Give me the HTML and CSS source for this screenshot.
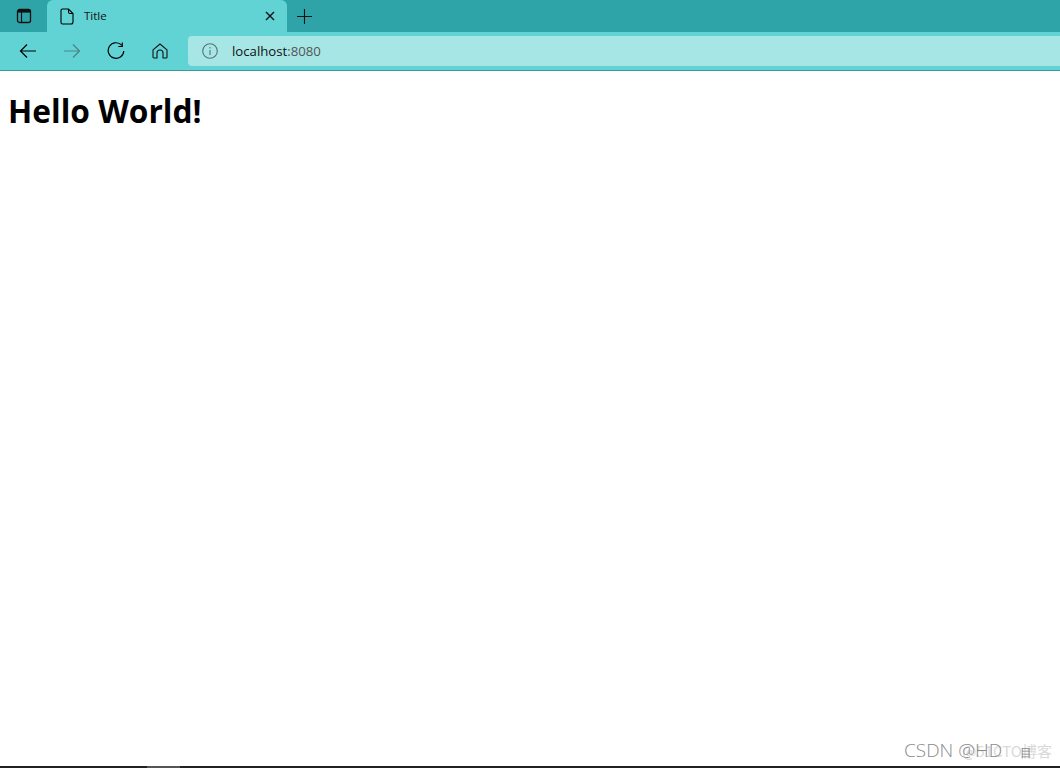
FILE: index.html
```html
<!DOCTYPE html>
<html lang="en">
<head>
    <meta charset="UTF-8">
    <title>Title</title>
    <link rel="stylesheet" href="styles.css">
</head>
<body>
    <div class="tabstrip">
        <div class="tab-actions">
            <svg class="icon" width="16" height="16" viewBox="0 0 16 16">
                <rect x="1.500" y="1.500" width="13" height="13" rx="2" fill="none" stroke="#111" stroke-width="1.300"/>
                <path d="M2 2h12v2.600H2z" fill="#111"/>
                <path d="M5.500 4v10" stroke="#111" stroke-width="1.200"/>
            </svg>
        </div>
        <div class="tab">
            <svg class="icon" width="14" height="17" viewBox="0 0 14 17">
                <path d="M2.500 1h6l4.500 4.500V14a2 2 0 0 1-2 2H2.500a1.500 1.500 0 0 1-1.500-1.500V2.500A1.500 1.500 0 0 1 2.500 1zM8.500 1v3a1.500 1.500 0 0 0 1.500 1.500h3" fill="none" stroke="#000" stroke-width="1.100"/>
            </svg>
            <span class="tab-title">Title</span>
            <svg class="icon tab-close" width="10" height="10" viewBox="0 0 10 10">
                <path d="M1 1l8 8M9 1l-8 8" stroke="#111" stroke-width="1.400"/>
            </svg>
        </div>
        <div class="new-tab">
            <svg class="icon" width="15" height="15" viewBox="0 0 15 15">
                <path d="M7.500 0v15M0 7.500h15" stroke="#111" stroke-width="1.100"/>
            </svg>
        </div>
    </div>

    <div class="toolbar">
        <div class="nav-button">
            <svg class="icon" width="18" height="16" viewBox="0 0 18 16">
                <path d="M17 8H1.500M8 1.500L1.500 8 8 14.500" fill="none" stroke="#000" stroke-width="1.200"/>
            </svg>
        </div>
        <div class="nav-button">
            <svg class="icon" width="18" height="16" viewBox="0 0 18 16">
                <path d="M1 8h15.500M10 1.500L16.500 8 10 14.500" fill="none" stroke="#4a8487" stroke-width="1.200"/>
            </svg>
        </div>
        <div class="nav-button">
            <svg class="icon" width="18" height="18" viewBox="0 0 18 18">
                <path d="M14.800 3.300A7.800 7.800 0 1 0 16.800 9" fill="none" stroke="#000" stroke-width="1.200"/>
                <path d="M15.300 0.500v4h-4" fill="none" stroke="#000" stroke-width="1.200"/>
            </svg>
        </div>
        <div class="nav-button">
            <svg class="icon" width="16" height="16" viewBox="0 0 16 16">
                <path d="M1 6.800L8 1l7 5.800V14a1 1 0 0 1-1 1h-3V10a3 3 0 0 0-6 0v5H2a1 1 0 0 1-1-1z" fill="none" stroke="#111" stroke-width="1.100" stroke-linejoin="round"/>
            </svg>
        </div>
        <div class="address-bar">
            <svg class="icon" width="16" height="16" viewBox="0 0 16 16">
                <circle cx="8" cy="8" r="7.300" fill="none" stroke="#5a7072" stroke-width="1.100"/>
                <path d="M8 7v5M8 4v1.500" stroke="#5a7072" stroke-width="1.100"/>
            </svg>
            <span class="url">localhost<span class="url-port">:8080</span></span>
        </div>
    </div>

    <div class="content">
        <h1>Hello World!</h1>
    </div>

    <div class="watermark">
        <span class="watermark-back">@51CTO博客</span>
        <span class="watermark-front">CSDN @HD<span class="watermark-end">目</span></span>
    </div>

    <div class="taskbar-edge">
        <div class="taskbar-thumb"></div>
    </div>
</body>
</html>
```

FILE: styles.css
```css
html, body {
    height: 100%;
}
body {
    font-family: "Open Sans", "Noto Sans", Arial, sans-serif;
    margin: 0;
    padding: 0;
    background-color: #fff;
    display: flex;
    flex-direction: column;
    height: 768px;
    overflow: hidden;
    position: relative;
}
.icon {
    display: block;
    flex: none;
}
.tabstrip {
    display: flex;
    height: 32px;
    background: #2fa4a8;
}
.tab-actions {
    width: 47px;
    display: flex;
    align-items: center;
    padding-left: 16px;
    box-sizing: border-box;
}
.tab {
    width: 240px;
    display: flex;
    align-items: center;
    background: #62d3d4;
    border-radius: 6px 6px 0 0;
    padding: 0 12px 0 13px;
    box-sizing: border-box;
}
.tab-title {
    font-size: 11.500px;
    line-height: 14px;
    color: #111;
    margin: -1px 0 0 10px;
    flex: 1;
}
.new-tab {
    display: flex;
    align-items: center;
    padding-left: 10px;
}
.toolbar {
    display: flex;
    align-items: center;
    height: 38px;
    background: #62d3d4;
    border-bottom: 1px solid #3a9a9c;
    padding-left: 6px;
}
.nav-button {
    width: 44px;
    display: flex;
    align-items: center;
    justify-content: center;
}
.address-bar {
    display: flex;
    align-items: center;
    flex: 1;
    height: 30px;
    margin-left: 6px;
    padding-left: 14px;
    background: #a6e7e6;
    border-radius: 4px 0 0 4px;
}
.url {
    font-size: 13.200px;
    color: #111;
    margin: -1px 0 0 14px;
}
.url-port {
    color: #555;
}
.content {
    flex: 1;
    padding: 20px 8px;
}
h1 {
    font-size: 31.700px;
    font-weight: 700;
    line-height: 40px;
    margin: 0;
    color: #000;
}
.watermark {
    position: absolute;
    right: 8px;
    bottom: 6px;
    width: 148px;
    height: 24px;
    white-space: nowrap;
}
.watermark-front {
    position: absolute;
    left: 0;
    top: 0;
    font-size: 19px;
    font-weight: 300;
    line-height: 24px;
    color: #8a8a8a;
}
.watermark-end {
    font-size: 12px;
    margin-left: 18px;
}
.watermark-back {
    position: absolute;
    right: 0;
    top: 2px;
    font-family: "Noto Sans CJK SC", sans-serif;
    font-size: 15px;
    color: #dadada;
}
.taskbar-edge {
    height: 2px;
    background: #222;
    padding-left: 147px;
}
.taskbar-thumb {
    width: 33px;
    height: 2px;
    background: #555;
}
```
